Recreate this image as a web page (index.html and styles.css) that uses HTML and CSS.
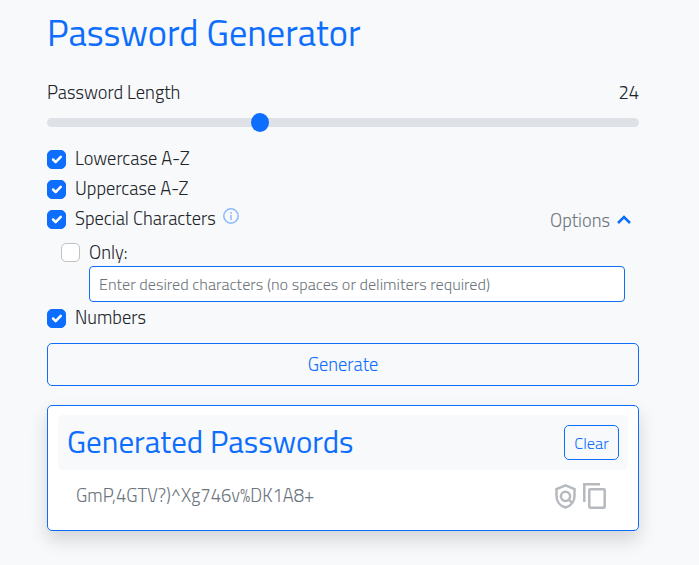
FILE: index.html
```html
<!DOCTYPE html>
<html lang="en">
<head>
<meta charset="utf-8">
<title>Password Generator</title>
<link rel="stylesheet" href="styles.css">
</head>
<body>
<main>
  <h1>Password Generator</h1>
  <div class="length"><label for="length">Password Length</label><span>24</span></div>
  <input class="range" id="length" type="range" min="0" max="64" value="22.7" step="0.1">
  <label class="check"><input type="checkbox" checked><span>Lowercase A-Z</span></label>
  <label class="check"><input type="checkbox" checked><span>Uppercase A-Z</span></label>
  <div class="special-row">
    <label class="check"><input type="checkbox" checked><span>Special Characters</span></label>
    <svg class="info" viewBox="0 0 16 16"><circle cx="8" cy="8" r="7.2"/><path d="M8 7v5M8 4v1.7"/></svg>
    <div class="options"><span>Options</span><svg viewBox="0 0 14 9"><path d="M1 8l6-6 6 6"/></svg></div>
  </div>
  <div class="only">
    <label class="check"><input type="checkbox"><span>Only:</span></label>
    <input class="chars" type="text" placeholder="Enter desired characters (no spaces or delimiters required)">
  </div>
  <label class="check"><input type="checkbox" checked><span>Numbers</span></label>
  <button class="generate">Generate</button>
  <section class="card">
    <header><h2>Generated Passwords</h2><button class="clear">Clear</button></header>
    <div class="result">
      <span class="password">GmP,4GTV?)^Xg746v%DK1A8+</span>
      <svg class="shield" viewBox="0 0 21 25"><path d="M10.5 1.4L1.5 5v7c0 5.4 3.6 10 9 11.5 5.4-1.5 9-6.1 9-11.5V5z"/><circle cx="10.5" cy="12.3" r="4.6"/><path d="M13.8 15.6l3.8 3.8"/></svg>
      <svg class="copy" viewBox="0 0 23 26"><path d="M1.3 19V1.3h15.7"/><rect x="6.3" y="6.3" width="15.4" height="18.4" rx="1"/></svg>
    </div>
  </section>
</main>
</body>
</html>
```
FILE: styles.css
```css
* { box-sizing: border-box; }
body {
  min-height: 565px;
  margin: 0;
  background: #f8f9fb;
  color: #212529;
  font: 300 18.4px/28px "Titillium Web", Roboto, sans-serif;
  white-space: nowrap;
}
main { width: 592px; margin-left: 47px; display: flex; flex-direction: column; }
h1, h2 { margin: 0; color: #0d6efd; font-weight: 400; }
h1 { height: 78px; font-size: 36.4px; line-height: 66px; }
.length { display: flex; justify-content: space-between; height: 30px; }
.range { appearance: none; width: 100%; height: 19px; margin: 5px 0 12px; background: none; }
.range::-webkit-slider-runnable-track { height: 9px; border-radius: 5px; background: #dee2e6; }
.range::-webkit-slider-thumb { appearance: none; width: 18px; height: 19px; margin-top: -5px; border-radius: 50%; background: #0d6efd; }
.check { display: flex; align-items: center; height: 30px; }
.check span { padding-bottom: 2px; }
.check input {
  appearance: none;
  width: 19px;
  height: 19px;
  margin: 0 9px 0 0;
  border: 1px solid #bfc1c3;
  border-radius: 5px;
  background: #fff;
}
.check input:checked {
  border-color: #0d6efd;
  background: #0d6efd url("data:image/svg+xml,%3Csvg xmlns='http://www.w3.org/2000/svg' viewBox='0 0 20 20'%3E%3Cpath fill='none' stroke='white' stroke-linecap='round' stroke-linejoin='round' stroke-width='3' d='M6 10l3 3 6-6'/%3E%3C/svg%3E") center / 17px;
}
.special-row { display: flex; height: 34px; }
.info { width: 16px; height: 16px; margin: 4px 0 0 7px; fill: none; stroke: #8cb8fc; stroke-width: 1.5; }
.options { display: flex; gap: 7px; margin: 2px 8px 0 auto; color: #6c757d; height: 30px; }
.options svg { width: 14px; height: 9px; margin-top: 9px; fill: none; stroke: #0d6efd; stroke-width: 2.5; }
.only { padding-left: 14px; height: 65px; }
.only .check { height: 28px; }
.only .check span { padding-bottom: 0; }
.chars {
  display: block;
  width: 536px;
  height: 36px;
  margin-left: 28px;
  padding: 0 9px;
  border: 1px solid #0d6efd;
  border-radius: 4px;
  background: #fff;
  font: inherit;
  font-size: 16.2px;
  outline: 0;
}
.chars::placeholder { color: #6c757d; opacity: 1; }
button { border: 1px solid #0d6efd; border-radius: 5px; background: transparent; color: #0d6efd; font: inherit; padding: 0; }
.generate { height: 43px; margin-top: 10px; padding-bottom: 1px; }
.card { height: 126px; margin-top: 19px; padding: 9px 10px; border: 1px solid #0d6efd; border-radius: 5px; background: #fff; box-shadow: 0 9px 18px rgba(0, 0, 0, .15); }
.card header { display: flex; align-items: center; justify-content: space-between; height: 55px; padding: 0 9px; border-radius: 5px; background: #f8f9fb; }
h2 { padding-bottom: 2px; font-size: 31px; }
.clear { width: 55px; height: 35px; font-size: 16.3px; }
.result { display: flex; align-items: center; height: 52px; padding: 0 22px 0 18px; color: #6c757d; }
.password { padding-bottom: 2px; }
.result svg { fill: none; stroke: #b6babe; stroke-width: 2.5; }
.shield { width: 21px; height: 25px; margin-left: auto; }
.copy { width: 23px; height: 26px; margin-left: 7px; }
```
